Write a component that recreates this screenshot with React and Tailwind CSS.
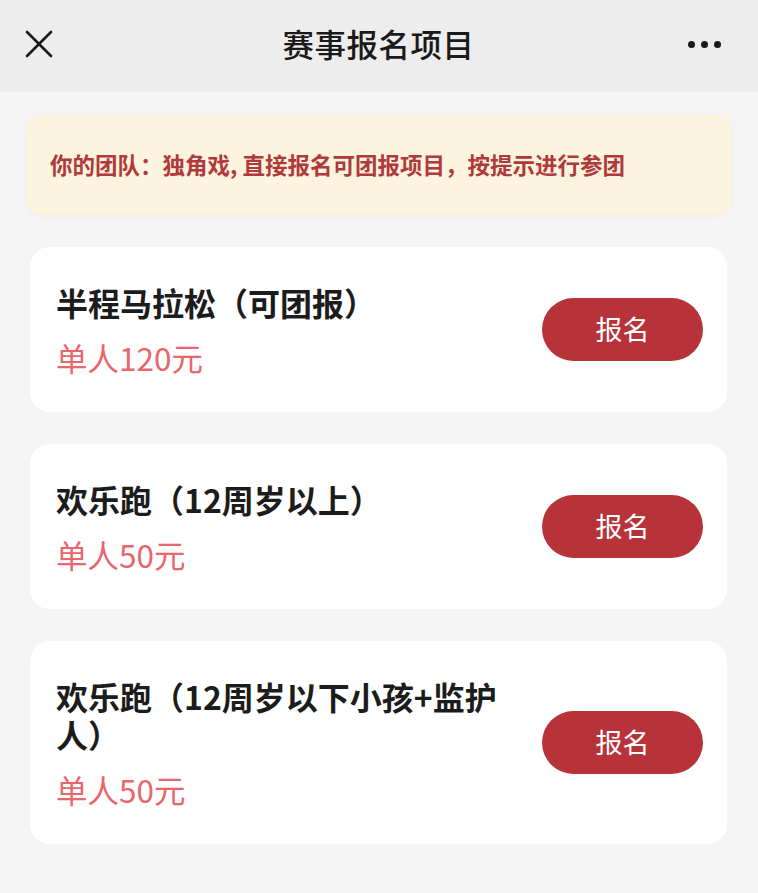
import React from 'react';

const items = [
  { title: '半程马拉松（可团报）', price: '单人120元' },
  { title: '欢乐跑（12周岁以上）', price: '单人50元' },
  { title: '欢乐跑（12周岁以下小孩+监护人）', price: '单人50元' },
];

const App = () => {
  return (
    <div
      className="min-h-[893px] w-full bg-[#f5f5f5]"
      style={{ fontFamily: '"Noto Sans CJK SC", "Noto Sans", sans-serif' }}
    >
      {/* Header */}
      <header className="h-[92px] bg-[#ededed] grid grid-cols-[1fr_auto_1fr] items-center pl-[24px] pr-[37px] pb-[4px]">
        <svg width="30" height="30" viewBox="0 0 30 30" className="text-[#1a1a1a]">
          <path d="M3 3 L27 27 M27 3 L3 27" stroke="currentColor" strokeWidth="2.6" strokeLinecap="round" />
        </svg>
        <h1 className="text-[31.5px] leading-none font-medium text-[#1a1a1a] tracking-[0.5px] pl-[12px]">赛事报名项目</h1>
        <div className="flex items-center gap-[6px] justify-end">
          <span className="w-[7px] h-[7px] rounded-full bg-[#1a1a1a]" />
          <span className="w-[7px] h-[7px] rounded-full bg-[#1a1a1a]" />
          <span className="w-[7px] h-[7px] rounded-full bg-[#1a1a1a]" />
        </div>
      </header>

      {/* Notice */}
      <div className="px-[26px] pt-[23px]">
        <div className="h-[100px] rounded-[16px] bg-[#fcf4df] shadow-[0_1px_4px_rgba(0,0,0,0.04)] flex items-center px-[24px]">
          <p className="text-[22.5px] font-semibold text-[#b0393b]">
            你的团队：独角戏, 直接报名可团报项目，按提示进行参团
          </p>
        </div>
      </div>

      {/* Items */}
      <div className="pl-[30px] pr-[31px] pt-[32px] pb-[40px] grid gap-[32px]">
        {items.map((item) => (
          <div
            key={item.title}
            className="bg-white rounded-[20px] pl-[26px] pr-[24px] py-[36px] flex items-center gap-[36px]"
          >
            <div className="flex-1">
              <p className="text-[32px] leading-[38px] font-bold text-[#1c1c1c]">{item.title}</p>
              <p className="mt-[17px] text-[31.5px] leading-[38px] text-[#e8666c]">{item.price}</p>
            </div>
            <button className="w-[161px] h-[63px] rounded-full bg-[#b8323a] text-white text-[27px]">
              报名
            </button>
          </div>
        ))}
      </div>
    </div>
  );
};

export default App;
